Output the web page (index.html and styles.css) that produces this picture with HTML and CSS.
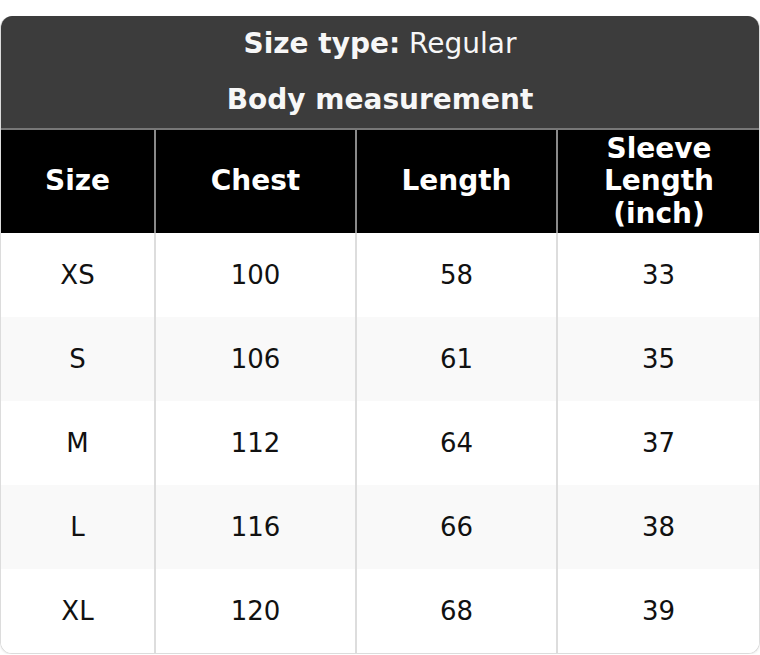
FILE: index.html
```html
<!DOCTYPE html>
<html lang="en">
<head>
<meta charset="utf-8">
<title>Size chart</title>
<link rel="stylesheet" href="styles.css">
</head>
<body>
<div class="chart">
  <div class="title-row"><span class="title-text"><strong>Size type:</strong> Regular</span></div>
  <div class="title-row"><span class="title-text"><strong>Body measurement</strong></span></div>
  <div class="grid head">
    <div class="cell">Size</div>
    <div class="cell">Chest</div>
    <div class="cell">Length</div>
    <div class="cell">Sleeve<br>Length<br>(inch)</div>
  </div>
  <div class="grid row">
    <div class="cell">XS</div><div class="cell">100</div><div class="cell">58</div><div class="cell">33</div>
  </div>
  <div class="grid row alt">
    <div class="cell">S</div><div class="cell">106</div><div class="cell">61</div><div class="cell">35</div>
  </div>
  <div class="grid row">
    <div class="cell">M</div><div class="cell">112</div><div class="cell">64</div><div class="cell">37</div>
  </div>
  <div class="grid row alt">
    <div class="cell">L</div><div class="cell">116</div><div class="cell">66</div><div class="cell">38</div>
  </div>
  <div class="grid row">
    <div class="cell">XL</div><div class="cell">120</div><div class="cell">68</div><div class="cell">39</div>
  </div>
</div>
</body>
</html>
```

FILE: styles.css
```css
* { box-sizing: border-box; }

html, body {
  margin: 0;
  padding: 0;
  background: #ffffff;
}

body {
  padding-top: 16px;
  font-family: "DejaVu Sans", "Liberation Sans", sans-serif;
  font-size: 26px;
  line-height: 1.25;
  color: #111111;
}

.chart {
  width: 760px;
  border: 1px solid #dcdcdc;
  border-top: none;
  border-radius: 12px;
  overflow: hidden;
  box-shadow: 0 1px 2px rgba(0, 0, 0, 0.08);
}

.title-row {
  height: 56px;
  background: #3c3c3c;
  color: #f7f7f7;
  display: flex;
  align-items: center;
  justify-content: center;
  font-size: 28px;
  line-height: 32px;
}

.title-text { display: block; text-align: center; }

.title-row strong { font-weight: bold; }

.grid {
  display: grid;
  grid-template-columns: 155px 201px 201px 1fr;
}

.cell {
  display: flex;
  align-items: center;
  justify-content: center;
  text-align: center;
  border-right: 2px solid #dddddd;
}

.cell:last-child { border-right: none; }

.head {
  background: #000000;
  color: #ffffff;
  font-weight: bold;
  font-size: 28px;
  line-height: 32.5px;
  border-top: 2px solid #777777;
  margin-left: -1px;
  margin-right: -1px;
  padding-left: 1px;
}

.head .cell {
  height: 103px;
  border-right-color: #8a8a8a;
}

.row .cell {
  height: 84px;
}

.row { background: #ffffff; }
.row.alt { background: #f9f9f9; }
```
